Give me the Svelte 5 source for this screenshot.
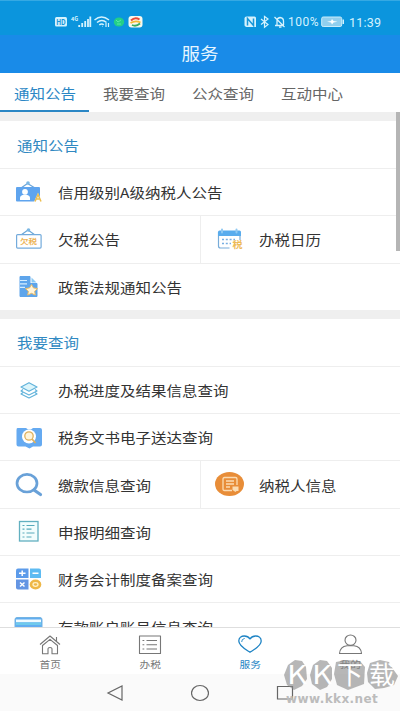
<script lang="ts">
	type Item = { icon: string; label: string };

	const tabs = ['通知公告', '我要查询', '公众查询', '互动中心'];

	// each inner array is one row; two items share a row side by side
	const sections: { title: string; rows: Item[][] }[] = [
		{
			title: '通知公告',
			rows: [
				[{ icon: 'credit', label: '信用级别A级纳税人公告' }],
				[
					{ icon: 'arrears', label: '欠税公告' },
					{ icon: 'calendar', label: '办税日历' }
				],
				[{ icon: 'policy', label: '政策法规通知公告' }]
			]
		},
		{
			title: '我要查询',
			rows: [
				[{ icon: 'layers', label: '办税进度及结果信息查询' }],
				[{ icon: 'document', label: '税务文书电子送达查询' }],
				[
					{ icon: 'search', label: '缴款信息查询' },
					{ icon: 'taxpayer', label: '纳税人信息' }
				],
				[{ icon: 'detail', label: '申报明细查询' }],
				[{ icon: 'calculator', label: '财务会计制度备案查询' }],
				[{ icon: 'card', label: '存款账户账号信息查询' }]
			]
		}
	];

	const nav: Item[] = [
		{ icon: 'home', label: '首页' },
		{ icon: 'list', label: '办税' },
		{ icon: 'heart', label: '服务' },
		{ icon: 'user', label: '我的' }
	];

	let activeTab = $state(0);
	let activeNav = $state(2);
</script>

{#snippet rowIcon(name: string)}
	<svg class="row-icon" viewBox="0 0 30 30" width="30" height="30">
		{#if name === 'credit'}
			<path d="M7 11 13.500 6.500 21 11" fill="none" stroke="#6aa5d8" stroke-width="1.200" />
			<circle cx="14" cy="6" r="1.800" fill="#7db8e4" />
			<rect x="2" y="10" width="24" height="14.500" rx="1" fill="#5fa4ee" />
			<circle cx="11" cy="14.800" r="2.900" fill="#fff" />
			<path d="M6 23v-2q0-2.500 3.500-3.200h3q3.500.7 3.500 3.200v2z" fill="#fff" />
			<path d="M20 25 24 16l4 9z" fill="#fff" />
			<path d="M21 24.500 24 17.500l3 7M22 22h4" fill="none" stroke="#edbd4e" stroke-width="1.500" />
		{:else if name === 'arrears'}
			<path d="m7 11 7-5 7 5" fill="none" stroke="#6ba7d8" stroke-width="1.200" />
			<circle cx="14.500" cy="6" r="1.800" fill="#7db8e4" />
			<rect x="2.600" y="10.600" width="24.500" height="13.500" rx="1" fill="#fff" stroke="#74abdc" stroke-width="1.200" />
			<text x="6" y="20.300" textLength="17" lengthAdjust="spacingAndGlyphs" font-size="7" font-weight="700" fill="#edb457">欠税</text>
		{:else if name === 'calendar'}
			<path d="M3.500 8v14q0 2 2 2h9" fill="none" stroke="#78acd9" stroke-width="1.200" />
			<path d="M25 12v4" stroke="#78acd9" stroke-width="1.200" />
			<path d="M3 12V8q0-1.500 1.500-1.500h20Q26 6.500 26 8v4z" fill="#59aced" />
			<path d="M7 5.500v3M21.500 5.500v3" stroke="#8fc8f2" stroke-width="2" stroke-linecap="round" />
			<path d="M7 15.500h13M7 19.500h9" stroke="#77aee2" stroke-width="1.600" stroke-dasharray="2 1.800" />
			<text x="17.500" y="24" textLength="10" lengthAdjust="spacingAndGlyphs" font-size="9" font-weight="700" fill="#edbb56">税</text>
		{:else if name === 'policy'}
			<path d="M6 4.500h10v7h7v13H6z" fill="#5ea5eb" stroke="#5ea5eb" stroke-linejoin="round" />
			<path d="m17.500 5.500 5 5h-5z" fill="#8ccaf3" />
			<path d="M6 8.500h7M6 11.800h7M6 15.300h5" stroke="#d5edff" stroke-width="1.200" />
			<path d="m17.500 12.500 1.900 3.400 4.100.7-2.900 2.700.7 3.800-3.800-1.800-3.800 1.800.7-3.800-2.900-2.700 4.100-.7z" fill="#fff5dc" stroke="#eebc65" />
		{:else if name === 'layers'}
			<g fill="none" stroke="#62b3db" stroke-width="1.200" stroke-linejoin="round">
				<path d="m7 12 8-4.300 8 4.300-8 4.300z" fill="#dcf5fb" />
				<path d="M9 14.500 7 16l8 4 8-4-2-1.500" />
				<path d="M9 17.500 7 19l8 4 8-4-2-1.500" />
			</g>
		{:else if name === 'document'}
			<path d="M3.500 6H12l2 1.500h3L19 6h7q2 0 2 2v14.500q0 2-2 2h-7l-3.500 2-4-2h-7q-2 0-2-2V8q0-2 1-2z" fill="#65aaf1" />
			<circle cx="15" cy="14.500" r="7" fill="#fff" />
			<circle cx="15" cy="14" r="4.200" fill="#fff4da" stroke="#dfb05c" stroke-width="1.300" />
			<path d="m18 17 3.500 4" stroke="#dfb05c" stroke-width="1.800" />
		{:else if name === 'search'}
			<ellipse cx="13" cy="13.200" rx="10" ry="8.800" fill="none" stroke="#69a1d8" stroke-width="2.700" />
			<path d="m20 20 6.500 4.500" stroke="#69a1d8" stroke-width="3.200" stroke-linecap="round" />
		{:else if name === 'taxpayer'}
			<ellipse cx="14.500" cy="14" rx="14.500" ry="12" fill="#e88d38" />
			<g fill="none" stroke="#fbdcb2" stroke-width="1.300">
				<path d="M17 20.500H9.500q-1.500 0-1.500-1.500V9q0-1.500 1.500-1.500h11Q22 7.500 22 9v6" />
				<path d="M11 11h8M11 14h8M11 17h4" />
			</g>
			<path d="M17.500 16.500h6v4.500h-2l-1 1-3-2z" fill="#fbdcb2" />
		{:else if name === 'detail'}
			<rect x="5.500" y="4.500" width="18.500" height="19.500" fill="#f2fdfd" stroke="#62b0c0" stroke-width="1.300" />
			<path d="M8.500 8.500h2M8.500 12.200h2M8.500 16h2M8.500 20h2M12.500 8.500h8M12.500 12.200h5M12.500 16h8M12.500 20h5" stroke="#58aabb" stroke-width="1.200" />
		{:else if name === 'calculator'}
			<path d="M4 4.500h10.500v9.500H2V6.500q0-2 2-2z" fill="#5c9bea" />
			<path d="M16 4.500h9q2 0 2 2V14H16z" fill="#5ebbf2" />
			<path d="M2 15.500h12.500v10H4q-2 0-2-2z" fill="#6495e3" />
			<ellipse cx="21.500" cy="20.500" rx="5.800" ry="5" fill="#eeb747" />
			<path d="M5 9.200h6.500M8.200 6.500v5.500M18.500 9.200h6M6 18.500l4.500 4M10.500 18.500l-4.500 4" stroke="#fff" stroke-width="1.500" />
			<ellipse cx="21.500" cy="20.500" rx="2.500" ry="1.800" fill="none" stroke="#fff1c9" stroke-width="1.300" />
		{:else}
			<rect x="1" y="5.500" width="27" height="19" rx="2" fill="#62adf0" stroke="#73b4e3" />
			<path d="M2 7.500h25v2.800H2z" fill="#f1fbff" />
			<path d="M2 10.500h25v2.500H2z" fill="#6fcaec" />
		{/if}
	</svg>
{/snippet}

{#snippet navIcon(name: string)}
	<svg viewBox="0 0 24 22" width="24" height="22" fill="none" stroke="currentColor" stroke-width="1.100" stroke-linejoin="round">
		{#if name === 'home'}
			<path d="M2 10.500 12 2l10 8.500M4.500 11.500v8.200H10v-5q0-1.200 2-1.200t2 1.200v5h5.500v-8.200L12 5.300zM18.500 3v4" />
		{:else if name === 'list'}
			<rect x="1.500" y="2" width="21" height="17.500" />
			<path d="M8.500 6.500h10.500M8.500 10.700h10.500M8.500 15h10.500M4.500 6.500h1.800M4.500 10.700h1.800M4.500 15h1.800" />
		{:else if name === 'heart'}
			<path d="M12 18.300C8.500 16 .8 12 .8 7c0-3.200 2.700-5 5.500-5Q10 2 12 5q2-3 5.700-3c2.800 0 5.500 1.800 5.500 5 0 5-7.700 9-11.200 11.300z" stroke-width="1.300" />
			<path d="M3.700 8q-.2-3 3-3.600" stroke-width=".9" />
		{:else}
			<ellipse cx="12.500" cy="6.200" rx="5.500" ry="5.200" />
			<path d="M1.500 19.500q.5-7 7.500-7.800h7q7 .8 7.500 7.800z" />
		{/if}
	</svg>
{/snippet}

<div class="screen">
	<div class="status-bar">
		<svg class="status-left" viewBox="0 0 90 14" width="90" height="14">
			<rect x="0" y="2" width="12" height="9.500" rx="1.500" fill="#d5f2fd" />
			<text x="1.200" y="9.700" font-size="7.500" font-weight="700" textLength="9.600" lengthAdjust="spacingAndGlyphs" fill="#1796d9">HD</text>
			<text x="16" y="5.500" font-size="5.500" font-weight="700" fill="#d5f2fd">4G</text>
			<path d="M24.200 12v-2M27.200 12V8M30.200 12V6M33 12V4M35.300 12V1.500" stroke="#d5f2fd" stroke-width="1.800" />
			<g fill="none" stroke="#d5f2fd" stroke-width="1.500">
				<path d="M39.500 5q7-6 14.500 0M42 7.500q5-4 9.500 0M44.300 9.800q2.500-1.800 4.500 0" />
				<path d="M47 11.300h.5M51 8v4M53.500 8v4" stroke-width="1.200" />
			</g>
			<ellipse cx="64" cy="7" rx="5.200" ry="4.600" fill="#23cf87" />
			<path d="M61 5l2 2 3-2M62 9h4" stroke="#57e9a7" fill="none" />
			<rect x="73.500" y="1" width="14" height="11.500" rx="3" fill="#f6f8ee" />
			<path d="M76 5.500q4-4 8.500-1" stroke="#e84b38" stroke-width="2" fill="none" />
			<path d="M75.500 8q5-3 10-.5" stroke="#f6b936" stroke-width="1.600" fill="none" />
			<path d="M77 10q4 2 8-1.500" stroke="#35ac63" stroke-width="1.800" fill="none" />
		</svg>
		<div class="status-right">
			<svg viewBox="0 0 42 14" width="42" height="14" fill="none" stroke="#d5f2fd">
				<path d="M3.500 1.500h8q1.500 0 1.500 1.500v9h-8Q1.500 12 1.500 10V3.500q0-2 2-2z" fill="#d5f2fd" stroke="none" />
				<path d="M4.500 10.500v-7l6 7v-7" stroke="#1796d9" stroke-width="1.500" />
				<path d="m18 4 7 5.500-3.500 2.700V1.500L25 4l-7 5.500" stroke-width="1.200" />
				<path d="M32 10.500h9M34 10V6q0-3 3-3.500Q40.500 3 40.500 6v4M31.500 2l10 10M36 12.200h2.500" stroke-width="1.300" />
			</svg>
			<span class="percent">100%</span>
			<svg class="battery" viewBox="0 0 24 12" width="24" height="12">
				<rect x=".7" y="1" width="20" height="9.500" rx="1.500" fill="#91cfee" stroke="#c9edfb" />
				<path d="M21.500 3.500h1.500v4.500h-1.500z" fill="#d5f2fd" />
				<path d="m6 5.700 4-.7 1-2 1.500 2 4 .7-4 .8-1.500 2-1-2z" fill="#fff" />
			</svg>
			<span class="clock">11:39</span>
		</div>
	</div>

	<header><h1>服务</h1></header>

	<div class="tabs">
		{#each tabs as tab, i}
			<button class:active={activeTab === i} onclick={() => (activeTab = i)}>
				<span class="wide">{tab}</span>
			</button>
		{/each}
	</div>

	<main>
		{#each sections as section}
			<section>
				<h2><span class="wide">{section.title}</span></h2>
				{#each section.rows as row}
					<div class="row">
						{#each row as item}
							<div class="cell">
								{@render rowIcon(item.icon)}
								<span class="wide">{item.label}</span>
							</div>
						{/each}
					</div>
				{/each}
			</section>
		{/each}
		<div class="scrollbar"></div>
	</main>

	<nav>
		{#each nav as item, i}
			<button class:active={activeNav === i} onclick={() => (activeNav = i)}>
				{@render navIcon(item.icon)}
				<span>{item.label}</span>
			</button>
		{/each}
	</nav>

	<div class="system-bar">
		<svg viewBox="0 0 18 18" width="18" height="18"><path d="M16 2v14L2 9z" /></svg>
		<svg viewBox="0 0 18 18" width="18" height="18"><ellipse cx="9" cy="9" rx="8.500" ry="7.500" /></svg>
		<svg viewBox="0 0 18 18" width="18" height="18"><path d="M1.500 2.500h15v12.500h-15z" /></svg>
	</div>

	<div class="watermark">
		<svg viewBox="0 0 118 34" width="118" height="34">
			<g class="blobs">
				<path d="m5 7 7-5 7 1 4 6 1 12-5 7-8 4-7-5-3-10z" />
				<path d="m30 7 7-5 7 1 5 7v11l-5 8-7 3-8-6-2-9z" />
				<path d="m53 4 10-2 14 1 5 6-1 17-8 3-8 3-11-5-3-11z" />
				<path d="m87 5 10-3 9 2 4 7 5 7-4 9-10 3-9 1-7-7-1-9z" />
			</g>
			<g class="letters">
				<text x="4" y="26" textLength="20" lengthAdjust="spacingAndGlyphs">K</text>
				<text x="29" y="26" textLength="20" lengthAdjust="spacingAndGlyphs">K</text>
				<text x="54" y="26" textLength="26" lengthAdjust="spacingAndGlyphs">下</text>
				<text x="86" y="26" textLength="26" lengthAdjust="spacingAndGlyphs">载</text>
			</g>
		</svg>
		<span>www.kkx.net</span>
	</div>
</div>

<style>
	:global(body) {
		margin: 0;
	}

	.screen {
		position: relative;
		display: flex;
		flex-direction: column;
		width: 400px;
		height: 711px;
		overflow: hidden;
		background: #fff;
		color: #333;
		font-family: 'Noto Sans CJK SC', sans-serif;
	}

	button {
		padding: 0;
		border: 0;
		background: none;
		color: inherit;
		font: inherit;
	}

	/* labels are set slightly wider than they are tall */
	.wide {
		display: inline-block;
		font-size: 13.6px;
		line-height: 20px;
		white-space: nowrap;
		transform: scaleX(1.14);
		transform-origin: left center;
	}

	.status-bar {
		display: flex;
		flex: none;
		justify-content: space-between;
		box-sizing: border-box;
		height: 35px;
		padding: 14px 19px 0 55px;
		border-top: 1px solid #35a9e3;
		background: #0b95dd;
	}

	.status-right {
		display: flex;
		align-items: center;
		height: 14px;
		color: #d5f2fd;
		font-family: Roboto, sans-serif;
	}

	.percent {
		width: 31px;
		margin-left: 3px;
		font-size: 12px;
		letter-spacing: 0.5px;
	}

	.battery {
		margin-left: 2px;
	}

	.clock {
		width: 32px;
		margin-left: 4px;
		font-size: 12.5px;
		letter-spacing: 0.2px;
	}

	header {
		flex: none;
		height: 38px;
		background: #198be8;
		color: #e6f5ff;
		text-align: center;
	}

	h1 {
		margin: 0;
		font-size: 16.5px;
		font-weight: 400;
		line-height: 37px;
		transform: scaleX(1.12);
	}

	.tabs {
		display: flex;
		flex: none;
		height: 39px;
		color: #666;
	}

	.tabs button {
		box-sizing: border-box;
		width: 89px;
		padding-left: 13.5px;
		border-bottom: 2px solid transparent;
		text-align: left;
	}

	.tabs .active {
		border-color: #2b87c5;
		color: #2b87c5;
	}

	main {
		position: relative;
		flex: none;
		height: 515px;
		overflow: hidden;
	}

	section {
		border-top: 9.5px solid #efefef;
	}

	h2 {
		display: flex;
		align-items: center;
		height: 47px;
		margin: 0;
		padding-left: 17px;
		color: #3089c2;
		font-weight: 400;
	}

	.row {
		display: flex;
		box-sizing: border-box;
		height: 47.3px;
		border-top: 1px solid #eee;
	}

	.cell {
		display: flex;
		flex: 1;
		align-items: center;
		box-sizing: border-box;
		padding-left: 14px;
	}

	.cell + .cell {
		border-left: 1px solid #eee;
	}

	.row-icon {
		flex: none;
		margin-right: 14px;
	}

	.scrollbar {
		position: absolute;
		top: 0;
		right: 0;
		width: 4px;
		height: 139px;
		background: #b5b5b5;
	}

	nav {
		display: flex;
		flex: none;
		box-sizing: border-box;
		height: 47px;
		border-top: 1px solid #dedede;
		color: #777;
	}

	nav button {
		display: flex;
		flex: 1;
		flex-direction: column;
		align-items: center;
		padding-top: 6px;
	}

	nav .active {
		color: #1d83c4;
	}

	nav span {
		font-size: 9.3px;
		line-height: 17px;
		transform: scaleX(1.15);
	}

	.system-bar {
		display: flex;
		flex: 1;
		align-items: center;
		justify-content: center;
		gap: 67px;
		background: #fafafa;
	}

	.system-bar svg {
		fill: none;
		stroke: #666;
		stroke-width: 1.2;
	}

	.watermark {
		position: absolute;
		top: 658px;
		left: 283px;
		width: 118px;
	}

	.watermark svg {
		display: block;
	}

	.blobs {
		fill: #888;
		opacity: 0.6;
	}

	.letters {
		fill: #fff;
		font-size: 25px;
	}

	.watermark span {
		display: block;
		margin-left: 3px;
		color: #bcbcbc;
		font: bold 12px/14px 'DejaVu Sans', sans-serif;
		letter-spacing: 0.4px;
	}
</style>
